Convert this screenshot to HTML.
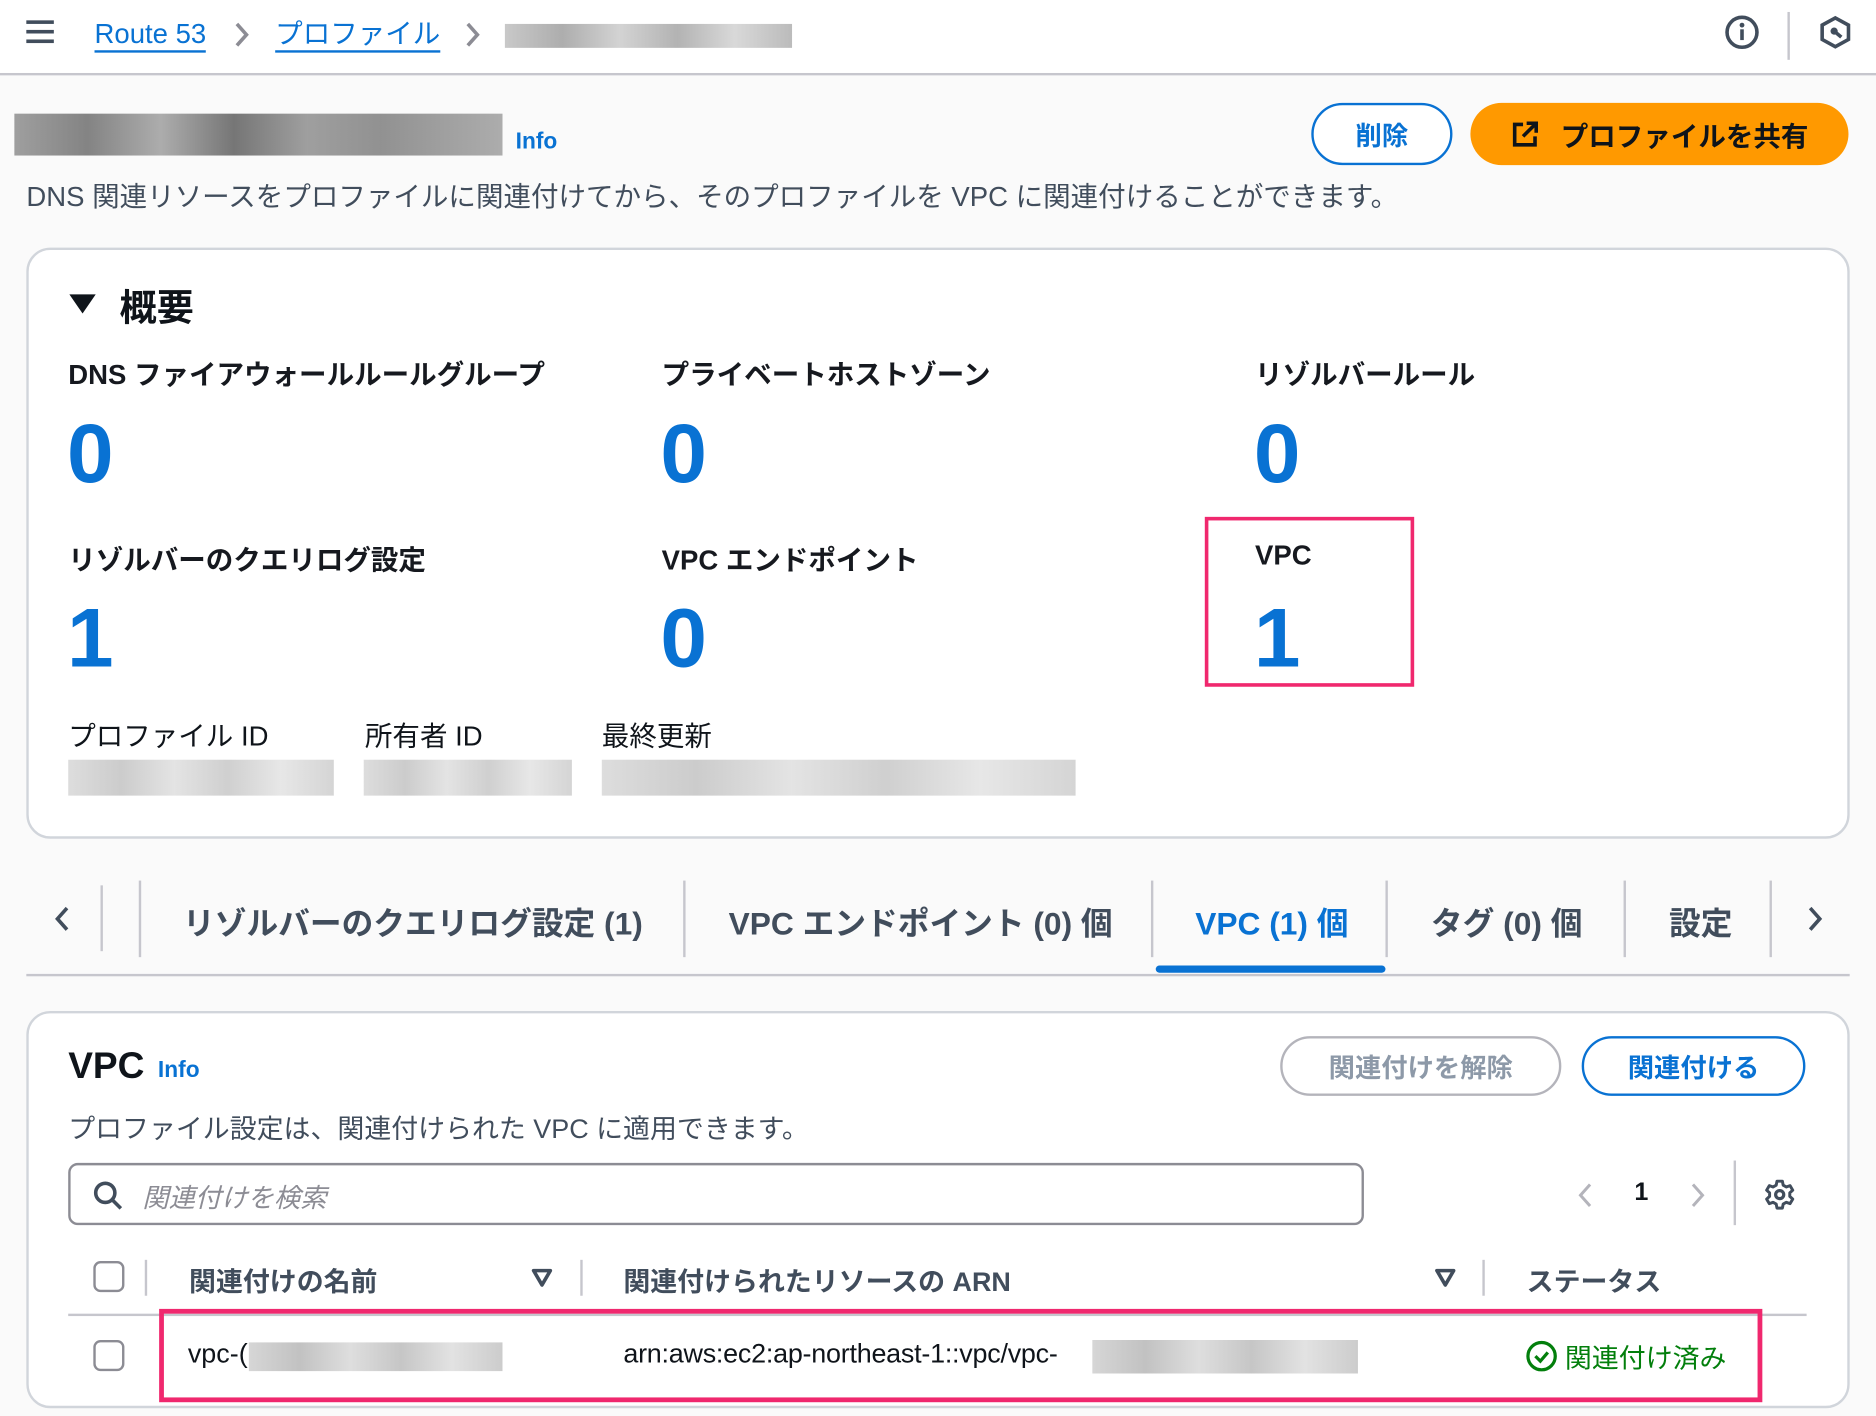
<!DOCTYPE html>
<html><head><meta charset="utf-8"><style>
*{box-sizing:border-box;margin:0;padding:0}
html,body{width:1876px;height:1416px;overflow:hidden;background:#fafafa}
#w{width:1568px;height:1184px;transform:scale(1.19643);transform-origin:0 0;position:relative;font-family:"Liberation Sans","Noto Sans CJK JP",sans-serif;color:#414d5c}
.a{position:absolute;white-space:nowrap}
.blue{color:#0972d3}
.b{font-weight:bold}
.blur{position:absolute;background:linear-gradient(90deg,#bbb,#999 20%,#c8c8c8 40%,#a0a0a0 60%,#cfcfcf 80%,#aaa);opacity:.8}
.card{position:absolute;background:#fff;border:2px solid #d1d5db;border-radius:20px}
.lbl{font-size:23px;font-weight:bold;color:#16191f}
.num{font-size:70px;font-weight:bold;color:#0972d3;line-height:1}
.div{position:absolute;width:2px;background:#c6c6cd}
.tab{font-size:26.5px;font-weight:bold;top:750px}
.btn{position:absolute;border-radius:30px;font-weight:bold;font-size:22px;display:flex;align-items:center;justify-content:center}
.cb{position:absolute;width:26px;height:26px;border:2px solid #8c8c94;border-radius:6px;background:#fff}
.chev{position:absolute}
</style></head><body><div id="w">
<div class="a" style="left:0;top:0;width:1568px;height:63px;background:#fff;border-bottom:2px solid #c6c6cd"></div>
<div class="a" style="left:22px;top:17px;width:23px;height:3px;background:#414d5c;box-shadow:0 8px 0 #414d5c,0 16px 0 #414d5c"></div>
<div class="a blue" style="left:79px;top:14px;font-size:23px;border-bottom:2px solid #0972d3;line-height:28px">Route 53</div>
<svg class="chev" style="left:195px;top:18px" width="14" height="22" viewBox="0 0 14 22"><path d="M3 2l8 9-8 9" fill="none" stroke="#8c8c94" stroke-width="3"/></svg>
<div class="a blue" style="left:230px;top:14px;font-size:23px;border-bottom:2px solid #0972d3;line-height:28px">プロファイル</div>
<svg class="chev" style="left:388px;top:18px" width="14" height="22" viewBox="0 0 14 22"><path d="M3 2l8 9-8 9" fill="none" stroke="#8c8c94" stroke-width="3"/></svg>
<div class="blur" style="left:422px;top:20px;width:240px;height:20px"></div>
<svg class="a" style="left:1441px;top:12px" width="30" height="30" viewBox="0 0 30 30"><circle cx="15" cy="15" r="12.5" fill="none" stroke="#414d5c" stroke-width="3"/><circle cx="15" cy="9" r="2" fill="#414d5c"/><rect x="13.5" y="12.5" width="3" height="9" fill="#414d5c"/></svg>
<div class="div" style="left:1494px;top:10px;height:40px"></div>
<svg class="a" style="left:1519px;top:12px" width="30" height="30" viewBox="0 0 30 30"><path d="M15 3 L26 9 V21 L15 27 L4 21 V9 Z" fill="none" stroke="#414d5c" stroke-width="3"/><circle cx="14" cy="14" r="3" fill="#414d5c"/><path d="M14 14 L20 19" stroke="#414d5c" stroke-width="3"/></svg>

<div class="blur" style="left:12px;top:95px;width:408px;height:35px;background:linear-gradient(90deg,#888,#666 15%,#999 30%,#555 45%,#888 60%,#777 75%,#999)"></div>
<div class="a blue b" style="left:431px;top:108px;font-size:19px">Info</div>
<div class="btn blue" style="left:1096px;top:86px;width:118px;height:52px;border:2px solid #0972d3;background:#fff">削除</div>
<div class="btn" style="left:1229px;top:86px;width:316px;height:52px;background:#ff9900;color:#0f141a;font-size:23px"><svg width="24" height="24" viewBox="0 0 24 24" style="margin-right:18px"><path d="M10 4H3V21H20V14M13 3H21V11M21 3L10 14" fill="none" stroke="#0f141a" stroke-width="3"/></svg>プロファイルを共有</div>
<div class="a" style="left:22px;top:145px;font-size:23px;color:#414d5c">DNS 関連リソースをプロファイルに関連付けてから、そのプロファイルを VPC に関連付けることができます。</div>

<div class="card" style="left:22px;top:207px;width:1524px;height:494px"></div>
<div class="a" style="left:58px;top:246px;width:0;height:0;border-left:11px solid transparent;border-right:11px solid transparent;border-top:16px solid #0f141a"></div>
<div class="a b" style="left:100px;top:232px;font-size:31px;color:#0f141a">概要</div>
<div class="a lbl" style="left:57px;top:294px">DNS ファイアウォールルールグループ</div>
<div class="a lbl" style="left:553px;top:294px">プライベートホストゾーン</div>
<div class="a lbl" style="left:1049px;top:294px">リゾルバールール</div>
<div class="a num" style="left:56px;top:344px">0</div>
<div class="a num" style="left:552px;top:344px">0</div>
<div class="a num" style="left:1048px;top:344px">0</div>
<div class="a lbl" style="left:57px;top:449px">リゾルバーのクエリログ設定</div>
<div class="a lbl" style="left:553px;top:449px">VPC エンドポイント</div>
<div class="a lbl" style="left:1049px;top:451px">VPC</div>
<div class="a num" style="left:56px;top:498px">1</div>
<div class="a num" style="left:552px;top:498px">0</div>
<div class="a num" style="left:1048px;top:498px">1</div>
<div class="a" style="left:1007px;top:432px;width:175px;height:142px;border:3px solid #f0286e"></div>
<div class="a" style="left:57px;top:596px;font-size:23px;color:#0f141a">プロファイル ID</div>
<div class="a" style="left:305px;top:596px;font-size:23px;color:#0f141a">所有者 ID</div>
<div class="a" style="left:503px;top:596px;font-size:23px;color:#0f141a">最終更新</div>
<div class="blur" style="left:57px;top:635px;width:222px;height:30px;opacity:.5"></div>
<div class="blur" style="left:304px;top:635px;width:174px;height:30px;opacity:.5"></div>
<div class="blur" style="left:503px;top:635px;width:396px;height:30px;opacity:.5"></div>

<svg class="chev" style="left:45px;top:757px" width="14" height="22" viewBox="0 0 14 22"><path d="M11 2l-8 9 8 9" fill="none" stroke="#414d5c" stroke-width="3"/></svg>
<div class="div" style="left:84px;top:740px;height:55px"></div>
<div class="div" style="left:116px;top:736px;height:64px"></div>
<div class="a tab" style="left:153px">リゾルバーのクエリログ設定 (1)</div>
<div class="div" style="left:571px;top:736px;height:64px"></div>
<div class="a tab" style="left:609px">VPC エンドポイント (0) 個</div>
<div class="div" style="left:962px;top:736px;height:64px"></div>
<div class="a tab blue" style="left:999px">VPC (1) 個</div>
<div class="div" style="left:1158px;top:736px;height:64px"></div>
<div class="a tab" style="left:1196px">タグ (0) 個</div>
<div class="div" style="left:1357px;top:736px;height:64px"></div>
<div class="a tab" style="left:1395px">設定</div>
<div class="div" style="left:1479px;top:736px;height:64px"></div>
<svg class="chev" style="left:1510px;top:757px" width="14" height="22" viewBox="0 0 14 22"><path d="M3 2l8 9-8 9" fill="none" stroke="#414d5c" stroke-width="3"/></svg>
<div class="a" style="left:22px;top:814px;width:1524px;height:2px;background:#c6c6cd"></div>
<div class="a" style="left:966px;top:807px;width:192px;height:6px;background:#0972d3;border-radius:3px"></div>

<div class="card" style="left:22px;top:845px;width:1524px;height:332px"></div>
<div class="a b" style="left:57px;top:873px;font-size:31px;color:#0f141a">VPC</div>
<div class="a blue b" style="left:132px;top:884px;font-size:19px">Info</div>
<div class="btn" style="left:1070px;top:866px;width:235px;height:50px;border:2px solid #b4b4bb;color:#8d99a8;background:#fff">関連付けを解除</div>
<div class="btn blue" style="left:1322px;top:866px;width:187px;height:50px;border:2px solid #0972d3;background:#fff">関連付ける</div>
<div class="a" style="left:57px;top:926px;font-size:22.5px">プロファイル設定は、関連付けられた VPC に適用できます。</div>
<div class="a" style="left:57px;top:972px;width:1083px;height:52px;border:2px solid #8c8c94;border-radius:8px;background:#fff"></div>
<svg class="a" style="left:77px;top:986px" width="26" height="26" viewBox="0 0 26 26"><circle cx="11" cy="11" r="8" fill="none" stroke="#414d5c" stroke-width="3"/><path d="M17 17L24 24" stroke="#414d5c" stroke-width="3"/></svg>
<div class="a" style="left:119px;top:984px;font-size:22px;font-style:italic;color:#8c8c94">関連付けを検索</div>
<svg class="chev" style="left:1318px;top:988px" width="14" height="22" viewBox="0 0 14 22"><path d="M11 2l-8 9 8 9" fill="none" stroke="#b4b4bb" stroke-width="2.5"/></svg>
<div class="a b" style="left:1366px;top:985px;font-size:21px;color:#0f141a">1</div>
<svg class="chev" style="left:1412px;top:988px" width="14" height="22" viewBox="0 0 14 22"><path d="M3 2l8 9-8 9" fill="none" stroke="#b4b4bb" stroke-width="2.5"/></svg>
<div class="div" style="left:1449px;top:970px;height:54px"></div>
<svg class="a" style="left:1474px;top:985px" width="27" height="27" viewBox="0 0 24 24"><circle cx="12" cy="12" r="3" fill="none" stroke="#414d5c" stroke-width="2.4"/><path d="M10 2h4l.6 3 2.3 1.3 2.8-1 2 3.4-2.2 2v2.6l2.2 2-2 3.4-2.8-1-2.3 1.3-.6 3h-4l-.6-3-2.3-1.3-2.8 1-2-3.4 2.2-2v-2.6l-2.2-2 2-3.4 2.8 1L9.4 5z" fill="none" stroke="#414d5c" stroke-width="2.2" stroke-linejoin="round"/></svg>
<div class="cb" style="left:78px;top:1054px"></div>
<div class="div" style="left:121px;top:1053px;height:30px"></div>
<div class="a b" style="left:158px;top:1054px;font-size:22.5px">関連付けの名前</div>
<svg class="a" style="left:444px;top:1060px" width="18" height="16" viewBox="0 0 18 16"><path d="M2 2h14L9 14z" fill="none" stroke="#414d5c" stroke-width="3" stroke-linejoin="round"/></svg>
<div class="div" style="left:485px;top:1053px;height:30px"></div>
<div class="a b" style="left:521px;top:1054px;font-size:22.5px">関連付けられたリソースの ARN</div>
<svg class="a" style="left:1199px;top:1060px" width="18" height="16" viewBox="0 0 18 16"><path d="M2 2h14L9 14z" fill="none" stroke="#414d5c" stroke-width="3" stroke-linejoin="round"/></svg>
<div class="div" style="left:1239px;top:1053px;height:30px"></div>
<div class="a b" style="left:1276px;top:1054px;font-size:22.5px">ステータス</div>
<div class="a" style="left:57px;top:1098px;width:1453px;height:2px;background:#c6c6cd"></div>
<div class="cb" style="left:78px;top:1120px"></div>
<div class="a" style="left:157px;top:1119px;font-size:22.5px;color:#0f141a">vpc-(</div>
<div class="blur" style="left:208px;top:1122px;width:212px;height:24px;opacity:.6"></div>
<div class="a" style="left:521px;top:1119px;font-size:22.5px;color:#0f141a;letter-spacing:-0.2px">arn:aws:ec2:ap-northeast-1::vpc/vpc-</div>
<div class="blur" style="left:913px;top:1120px;width:222px;height:28px;opacity:.6"></div>
<svg class="a" style="left:1275px;top:1120px" width="27" height="27" viewBox="0 0 26 26"><circle cx="13" cy="13" r="11" fill="none" stroke="#037f0c" stroke-width="2.6"/><path d="M8 13l4 4 6-7" fill="none" stroke="#037f0c" stroke-width="2.6"/></svg>
<div class="a" style="left:1308px;top:1118px;font-size:22.5px;color:#037f0c">関連付け済み</div>
<div class="a" style="left:133px;top:1094px;width:1340px;height:78px;border:4px solid #f0286e"></div>
</div></body></html>
